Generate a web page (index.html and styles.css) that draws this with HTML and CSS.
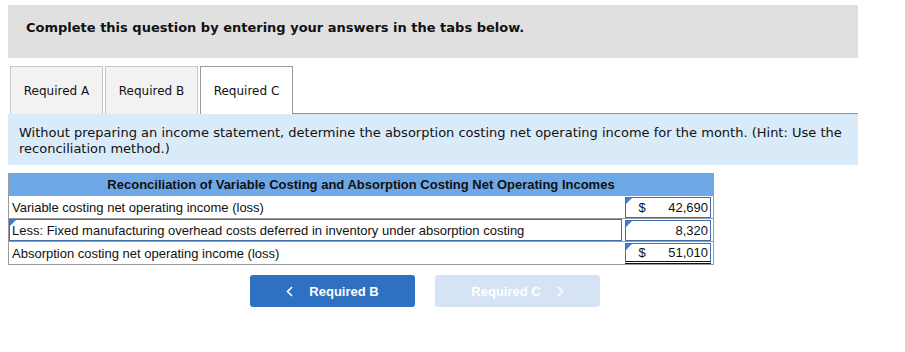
FILE: index.html
```html
<!DOCTYPE html>
<html lang="en">
<head>
    <meta charset="UTF-8">
    <title>Required C</title>
    <link rel="stylesheet" href="styles.css">
</head>
<body>
    <div class="prompt">Complete this question by entering your answers in the tabs below.</div>

    <div class="tabs">
        <div class="tab">Required A</div>
        <div class="tab">Required B</div>
        <div class="tab active">Required C</div>
        <div class="tab-fill"></div>
    </div>

    <div class="hint">
        Without preparing an income statement, determine the absorption costing net operating income for the month. (Hint: Use the reconciliation method.)
    </div>

    <table class="recon">
        <tr>
            <th colspan="2">Reconciliation of Variable Costing and Absorption Costing Net Operating Incomes</th>
        </tr>
        <tr>
            <td class="label">Variable costing net operating income (loss)</td>
            <td class="amount"><div class="cell"><span class="flag"></span><span>$</span><span>42,690</span></div></td>
        </tr>
        <tr>
            <td class="label selected"><span class="flag"></span>Less: Fixed manufacturing overhead costs deferred in inventory under absorption costing</td>
            <td class="amount"><div class="cell"><span class="flag"></span><span></span><span>8,320</span></div></td>
        </tr>
        <tr>
            <td class="label">Absorption costing net operating income (loss)</td>
            <td class="amount"><div class="cell total"><span class="flag"></span><span>$</span><span>51,010</span></div></td>
        </tr>
    </table>

    <div class="nav">
        <button class="nav-btn prev">
            <svg class="chev" width="7" height="11" viewBox="0 0 7 11"><path d="M6 1 L1.5 5.5 L6 10" fill="none" stroke="white" stroke-width="1.6"/></svg>
            Required B
        </button>
        <button class="nav-btn next" disabled>
            Required C
            <svg class="chev" width="7" height="11" viewBox="0 0 7 11"><path d="M1 1 L5.5 5.5 L1 10" fill="none" stroke="white" stroke-width="1.6"/></svg>
        </button>
    </div>
</body>
</html>
```

FILE: styles.css
```css
* {
    margin: 0;
    padding: 0;
    box-sizing: border-box;
}

body {
    font-family: "DejaVu Sans", Verdana, sans-serif;
    font-size: 13px;
    color: #111;
    background: white;
    padding: 5px 0 0 8px;
}

.prompt {
    width: 850px;
    height: 53px;
    background: #e0e0e0;
    font-weight: bold;
    padding: 15px 0 0 18px;
}

/* tab strip */
.tabs {
    display: flex;
    width: 850px;
    margin-top: 8px;
    padding-left: 2px;
    gap: 2px;
}

.tab {
    width: 93px;
    height: 48px;
    background: #f2f2f2;
    border: 1px solid #c8c8c8;
    border-bottom: none;
    display: flex;
    align-items: center;
    justify-content: center;
    font-size: 12px;
    padding-top: 1px;
}

.tab.active {
    background: white;
    border-color: #9a9a9a;
}

.tab-fill {
    flex: 1;
    border-bottom: 1px solid #8f8f8f;
    margin-left: -2px;
}

.hint {
    width: 850px;
    height: 51px;
    background: #d9ebf9;
    padding: 11px 11px 0;
    line-height: 16px;
}

/* reconciliation table */
.recon {
    margin-top: 8px;
    width: 706px;
    border-collapse: collapse;
    font-family: "Liberation Sans", Arial, sans-serif;
    font-size: 13px;
    border: 1px solid #9a9a9a;
}

.recon th {
    background: #6fa8e7;
    height: 22px;
    font-weight: bold;
    color: #111;
    border: 1px solid #9a9a9a;
}

.recon td {
    height: 23px;
    border-top: 1px solid #9a9a9a;
    border-bottom: 1px solid #9a9a9a;
}

.label {
    padding-left: 3px;
    position: relative;
}

.label.selected {
    box-shadow: inset 0 0 0 1px #3e6fb0;
}

.amount {
    width: 92px;
    padding: 0 2px 0 3px;
}

.cell {
    position: relative;
    display: flex;
    justify-content: space-between;
    height: 21px;
    align-items: center;
    border: 1px solid #3e6fb0;
    padding: 0 2px 0 13px;
}

.cell.total {
    border-bottom: 3px double #111;
}

.flag {
    position: absolute;
    left: 0;
    top: 0;
    width: 0;
    height: 0;
    border-top: 6px solid #3b7fd8;
    border-right: 6px solid transparent;
}

.label .flag {
    left: 1px;
    top: 1px;
}

/* previous / next buttons */
.nav {
    display: flex;
    gap: 20px;
    margin: 10px 0 0 242px;
}

.nav-btn {
    width: 165px;
    height: 32px;
    border: none;
    border-radius: 3px;
    font-family: "Liberation Sans", Arial, sans-serif;
    font-size: 13px;
    font-weight: bold;
    color: white;
    display: flex;
    align-items: center;
    justify-content: center;
    gap: 16px;
}

.prev {
    background: #2e70c2;
}

.next {
    background: #d6e3f4;
}
```
